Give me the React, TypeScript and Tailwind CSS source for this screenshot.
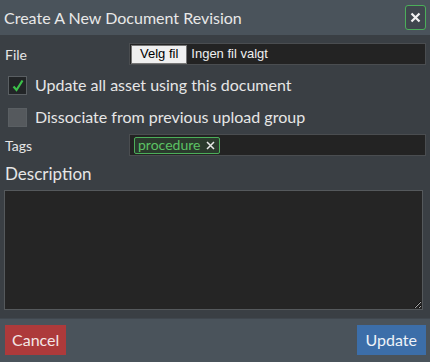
import { useState } from "react";

const font = { fontFamily: 'Lato, "Noto Sans", sans-serif' };
const arial = { fontFamily: '"Liberation Sans", Arial, sans-serif' };

const CheckRow = ({ checked, label }: { checked: boolean; label: string }) => (
  <label className="flex items-center gap-[8px] pl-[4px] h-[32px]">
    {checked ? (
      <span className="w-[19px] h-[19px] bg-[#222527] border border-[#5a5f63] flex items-center justify-center">
        <svg width="12" height="13" viewBox="0 0 12 13">
          <path d="M1.5 7.5 L4.5 11 L10.5 1.5" stroke="#3cc24a" strokeWidth="2.2" fill="none" />
        </svg>
      </span>
    ) : (
      <span className="w-[19px] h-[19px] bg-[#55595d] border border-[#5a5f63]" />
    )}
    <span className="text-[16px] text-[#e6e6e6]">{label}</span>
  </label>
);

const App = () => {
  const [tags] = useState(["procedure"]);
  return (
    <div className="w-[430px] h-[362px] bg-[#3a3f44] flex flex-col" style={font}>
      <div className="h-[35px] bg-[#4a535b] flex items-center justify-between pl-[4px] pr-[4px]">
        <span className="text-[16px] text-[#e8e8e8]">Create A New Document Revision</span>
        <button className="w-[21px] h-[25px] bg-[#3f464d] border border-[#4cae5a] rounded-[3px] flex items-center justify-center">
          <svg width="11" height="11" viewBox="0 0 11 11">
            <path d="M1.5 1.5 L9.5 9.5 M9.5 1.5 L1.5 9.5" stroke="#f2f2f2" strokeWidth="2.2" />
          </svg>
        </button>
      </div>

      <div className="flex-1 flex flex-col px-[4px] pt-[8px]">
        <div className="flex items-center h-[22px]">
          <span className="w-[125px] pl-[1px] text-[14px] text-[#e6e6e6]">File</span>
          <div className="flex-1 h-[22px] bg-[#232323] border border-[#4a4d50] flex items-center pl-[1px]">
            <span
              className="h-[19px] px-[8px] bg-[#efefef] border border-[#767676] text-[13px] text-black flex items-center"
              style={arial}
            >
              Velg fil
            </span>
            <span className="pl-[4px] text-[13px] text-[#f0f0f0]" style={arial}>
              Ingen fil valgt
            </span>
          </div>
        </div>

        <div className="mt-[4px]">
          <CheckRow checked label="Update all asset using this document" />
          <CheckRow checked={false} label="Dissociate from previous upload group" />
        </div>

        <div className="flex items-center h-[22px] mt-[1px]">
          <span className="w-[125px] pl-[1px] text-[14px] text-[#e6e6e6]">Tags</span>
          <div className="flex-1 h-[22px] bg-[#232323] border border-[#4a4d50] flex items-center pl-[4px]">
            {tags.map((t) => (
              <span
                key={t}
                className="h-[17px] pl-[3px] pr-[4px] border border-[#4cae5a] bg-[#2b3a2d] rounded-[2px] flex items-center gap-[6px] text-[14px] text-[#5cc264] leading-none"
              >
                {t}
                <svg width="9" height="9" viewBox="0 0 9 9">
                  <path d="M1 1 L8 8 M8 1 L1 8" stroke="#e8e8e8" strokeWidth="1.5" />
                </svg>
              </span>
            ))}
          </div>
        </div>

        <span className="mt-[7px] pl-[1px] text-[17px] text-[#e6e6e6] leading-[22px]">Description</span>
        <textarea className="mt-[5px] w-[419px] h-[120px] bg-[#252525] border border-[#55595c] text-white outline-none" />
      </div>

      <div className="h-[44px] bg-[#4a535b] border-t border-[#40474e] flex items-center justify-between pl-[5px] pr-[4px] pb-[1px]">
        <button className="h-[30px] px-[7px] bg-[#ad3a3b] text-[16px] text-[#f3e6e6]">Cancel</button>
        <button className="h-[30px] px-[9px] bg-[#3c6ea9] text-[16px] text-[#eef2f8]">Update</button>
      </div>
    </div>
  );
};

export default App;
